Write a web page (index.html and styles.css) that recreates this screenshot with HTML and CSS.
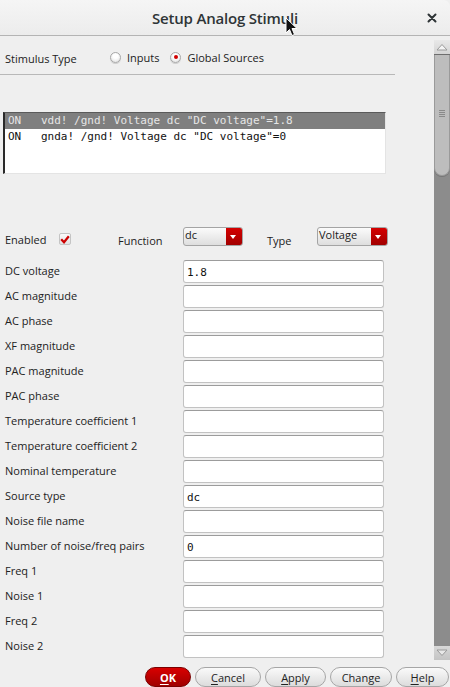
FILE: index.html
```html
<!DOCTYPE html>
<html>
<head>
<meta charset="utf-8">
<link rel="stylesheet" href="styles.css">
</head>
<body>
<div class="window">
  <div class="titlebar">
    <span class="title">Setup Analog Stimuli</span>
    <svg class="close" width="10" height="10" viewBox="0 0 10 10"><path d="M1.5 1.5 L8.5 8.5 M8.5 1.5 L1.5 8.5" stroke="#2e3436" stroke-width="2" stroke-linecap="round"/></svg>
  </div>
  <div class="main">
    <div class="content">
      <div class="stim-row">
        <span class="stim-label">Stimulus Type</span>
        <span class="radio"></span><span class="radio-text">Inputs</span>
        <span class="radio checked"></span><span class="radio-text">Global Sources</span>
      </div>
      <div class="sep"></div>
      <div class="list">
        <div class="list-row selected"><span class="on">ON</span>vdd! /gnd! Voltage dc "DC voltage"=1.8</div>
        <div class="list-row"><span class="on">ON</span>gnda! /gnd! Voltage dc "DC voltage"=0</div>
      </div>
      <div class="enabled-row">
        <span class="en-label">Enabled</span>
        <span class="checkbox"><svg width="10" height="9" viewBox="0 0 10 9"><path d="M1.2 4.2 L4 7.2 L8.8 1.2" fill="none" stroke="#cc0000" stroke-width="2.2"/></svg></span>
        <span class="fn-label">Function</span>
        <span class="combo combo-dc"><span class="combo-text">dc</span><span class="combo-arrow"></span></span>
        <span class="type-label">Type</span>
        <span class="combo combo-type"><span class="combo-text">Voltage</span><span class="combo-arrow"></span></span>
      </div>
      <div class="fields">
        <span class="flabel">DC voltage</span><span class="finput">1.8</span>
        <span class="flabel">AC magnitude</span><span class="finput"></span>
        <span class="flabel">AC phase</span><span class="finput"></span>
        <span class="flabel">XF magnitude</span><span class="finput"></span>
        <span class="flabel">PAC magnitude</span><span class="finput"></span>
        <span class="flabel">PAC phase</span><span class="finput"></span>
        <span class="flabel">Temperature coefficient 1</span><span class="finput"></span>
        <span class="flabel">Temperature coefficient 2</span><span class="finput"></span>
        <span class="flabel">Nominal temperature</span><span class="finput"></span>
        <span class="flabel">Source type</span><span class="finput">dc</span>
        <span class="flabel">Noise file name</span><span class="finput"></span>
        <span class="flabel">Number of noise/freq pairs</span><span class="finput">0</span>
        <span class="flabel">Freq 1</span><span class="finput"></span>
        <span class="flabel">Noise 1</span><span class="finput"></span>
        <span class="flabel">Freq 2</span><span class="finput"></span>
        <span class="flabel">Noise 2</span><span class="finput"></span>
      </div>
    </div>
    <div class="scrollbar">
      <div class="sb-up"><svg width="12" height="8" viewBox="0 0 12 8"><path d="M1 7 L6 1.5 L11 7 Z" fill="#f4f4f4" stroke="#9a9a9a" stroke-width="1"/></svg></div>
      <div class="sb-thumb"><span class="grip"></span></div>
      <div class="sb-track"></div>
      <div class="sb-down"><svg width="12" height="8" viewBox="0 0 12 8"><path d="M1 1 L6 6.5 L11 1 Z" fill="#e8e8e8" stroke="#9a9a9a" stroke-width="1"/></svg></div>
    </div>
  </div>
  <div class="buttons">
    <span class="btn ok"><u>O</u>K</span>
    <span class="btn cancel"><u>C</u>ancel</span>
    <span class="btn apply"><u>A</u>pply</span>
    <span class="btn change">Change</span>
    <span class="btn help"><u>H</u>elp</span>
  </div>
  <svg class="cursor" width="13" height="20" viewBox="0 0 13 20"><path d="M1 1 L1 16 L4.5 12.5 L7 18.5 L9.5 17.5 L7 11.5 L12 11.5 Z" fill="#111" stroke="#fff" stroke-width="1"/></svg>
</div>
</body>
</html>
```

FILE: styles.css
```css
html, body {
  margin: 0;
  padding: 0;
  background: #efefef;
}
.window {
  position: relative;
  width: 450px;
  height: 687px;
  overflow: hidden;
  background: #efefef;
  font-family: "Open Sans", "Noto Sans", sans-serif;
  font-size: 11px;
  color: #222;
  border-top-right-radius: 6px;
}
.titlebar {
  height: 35px;
  border-bottom: 1px solid #b4b4b4;
  background: linear-gradient(#f5f5f5, #ececec);
  display: flex;
  align-items: center;
  justify-content: center;
  position: relative;
  border-top-right-radius: 6px;
}
.title {
  font-size: 15px;
  font-weight: 600;
  letter-spacing: -0.2px;
  color: #2e3436;
  margin-left: 0;
  margin-top: 1px;
}
.close {
  position: absolute;
  right: 13px;
  top: 13px;
}
.main {
  display: flex;
}
.content {
  width: 434px;
  height: 624px;
}
.stim-row {
  display: flex;
  align-items: center;
  height: 22px;
  margin-top: 10px;
  padding-left: 5px;
}
.stim-label {
  width: 105px;
  margin-top: 2px;
}
.radio {
  width: 11px;
  height: 11px;
  border-radius: 50%;
  border: 1px solid #a8a8a8;
  background: radial-gradient(circle at 50% 35%, #ffffff 30%, #dcdcdc 100%);
  box-sizing: border-box;
  position: relative;
  box-shadow: 0 1px 0 #cfcfcf;
}
.radio.checked::after {
  content: "";
  position: absolute;
  left: 2.5px;
  top: 2.5px;
  width: 4px;
  height: 4px;
  border-radius: 50%;
  background: #d00000;
}
.radio-text {
  margin-left: 6px;
  margin-right: 11px;
}
.sep {
  height: 1px;
  width: 395px;
  background: #b8b8b8;
  margin-top: 6px;
}
.list {
  margin-top: 37px;
  margin-left: 3px;
  width: 383px;
  height: 62px;
  box-sizing: border-box;
  background: #fff;
  border-top: 1px solid #5a5a5a;
  border-left: 2px solid #2a2a2a;
  border-right: 1px solid #e4e4e4;
  border-bottom: 1px solid #e4e4e4;
  font-family: "DejaVu Sans Mono", monospace;
  font-size: 11px;
  color: #111;
}
.list-row {
  height: 16px;
  line-height: 16px;
  padding-left: 3px;
  white-space: pre;
}
.list-row.selected {
  background: #7f7f7f;
  color: #e6e6e6;
}
.on {
  display: inline-block;
  width: 33px;
}
.enabled-row {
  display: flex;
  align-items: center;
  height: 19px;
  margin-top: 53px;
  padding-left: 5px;
}
.en-label {
  width: 54px;
  margin-top: 6px;
}
.checkbox {
  width: 12px;
  height: 12px;
  box-sizing: border-box;
  border: 1px solid #c4c4c4;
  border-radius: 2px;
  background: linear-gradient(#fafafa, #e2e2e2);
  display: flex;
  align-items: center;
  justify-content: center;
  margin-top: 5px;
}
.fn-label {
  margin-left: 47px;
  width: 65px;
  margin-top: 7px;
}
.combo {
  display: flex;
  height: 19px;
  box-sizing: border-box;
  border: 1px solid #a4a4a4;
  border-radius: 3px;
  background: linear-gradient(#fbfbfb, #dedede);
  overflow: hidden;
}
.combo-dc { width: 60px; }
.combo-type { width: 71px; }
.combo-text {
  flex: 1;
  padding-left: 1px;
  line-height: 14px;
}
.combo-arrow {
  width: 16px;
  background: linear-gradient(#d40000, #a20000);
  position: relative;
}
.combo-arrow::after {
  content: "";
  position: absolute;
  left: 4px;
  top: 7px;
  border-left: 3.5px solid transparent;
  border-right: 3.5px solid transparent;
  border-top: 4px solid #fff;
}
.type-label {
  margin-left: 24px;
  width: 50px;
  margin-top: 7px;
}
.fields {
  display: grid;
  grid-template-columns: 178px 201px;
  grid-auto-rows: 23px;
  row-gap: 2px;
  margin-top: 14px;
  padding-left: 5px;
}
.flabel {
  line-height: 22px;
  white-space: nowrap;
}
.finput {
  box-sizing: border-box;
  height: 23px;
  background: #fff;
  border: 1px solid #c2c2c2;
  border-top-color: #9c9c9c;
  border-radius: 3px;
  font-family: "DejaVu Sans Mono", monospace;
  font-size: 11px;
  line-height: 21px;
  padding-left: 3px;
  padding-top: 1px;
  color: #111;
}
.scrollbar {
  width: 16px;
  height: 620px;
  margin-top: 4px;
  display: flex;
  flex-direction: column;
}
.sb-up, .sb-down {
  height: 15px;
  background: linear-gradient(#e8e8e8, #d4d4d4);
  display: flex;
  align-items: center;
  justify-content: center;
}
.sb-up {
  border-bottom: 1px solid #6e6e6e;
  box-sizing: border-box;
}
.sb-down {
  height: 14px;
  background: linear-gradient(#d8d8d8, #c4c4c4);
}
.sb-thumb {
  height: 121px;
  background: #bdbdbd;
  border-radius: 0 0 8px 8px;
  border: 1px solid #9a9a9a;
  border-top: none;
  box-sizing: border-box;
  display: flex;
  align-items: center;
  justify-content: center;
  position: relative;
  z-index: 1;
  box-shadow: 0 1px 0 #777;
}
.grip {
  width: 6px;
  height: 7px;
  background: repeating-linear-gradient(#8a8a8a 0, #8a8a8a 1px, transparent 1px, transparent 2px);
  margin-top: -4px;
}
.sb-track {
  flex: 1;
  background: #8c8c8c;
  margin-top: -8px;
}
.buttons {
  display: flex;
  gap: 4px;
  padding-left: 145px;
  margin-top: 7px;
}
.btn {
  box-sizing: border-box;
  height: 20px;
  border-radius: 10px;
  border: 1px solid #a6a6a6;
  background: linear-gradient(#fafafa, #dcdcdc);
  display: flex;
  align-items: center;
  justify-content: center;
  font-size: 11px;
  color: #222;
}
.btn u {
  text-decoration-thickness: 1px;
  text-underline-offset: 2px;
}
.ok {
  width: 46px;
  background: linear-gradient(#d80000, #a00000);
  border-color: #7a0000;
  color: #fff;
  font-weight: 700;
}
.cancel { width: 66px; }
.apply { width: 61px; }
.change { width: 62px; }
.help { width: 53px; }
.cursor {
  position: absolute;
  left: 285px;
  top: 17px;
}
```
